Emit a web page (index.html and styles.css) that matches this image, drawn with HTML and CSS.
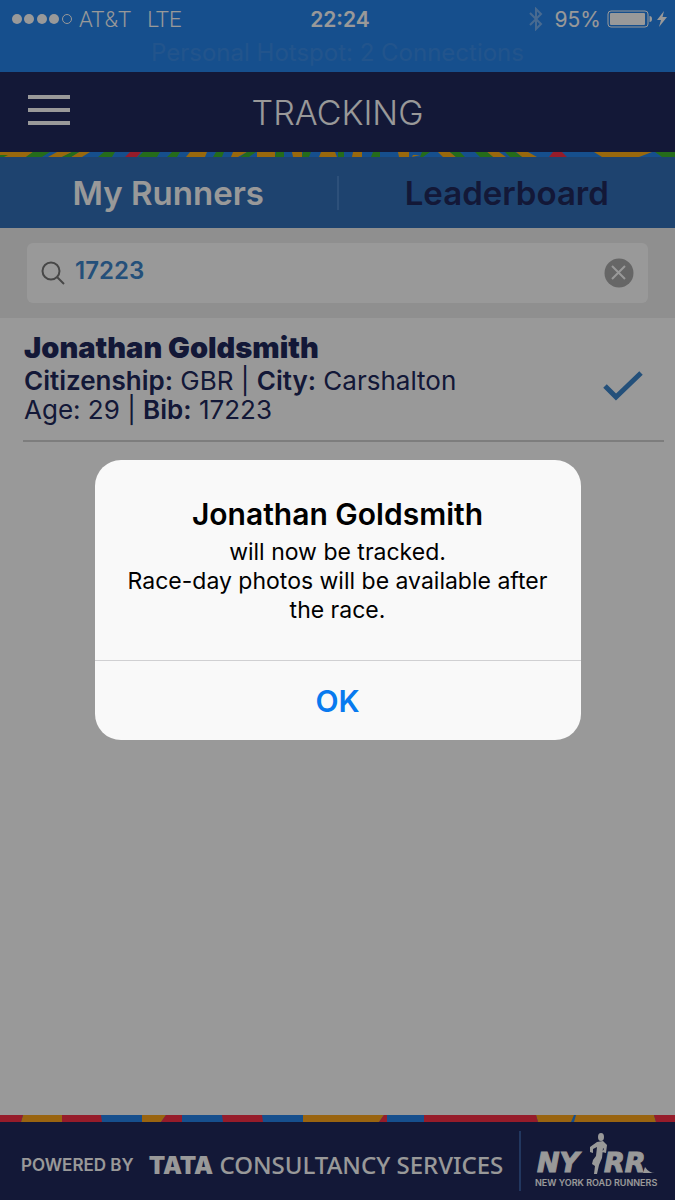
FILE: index.html
```html
<!DOCTYPE html>
<html lang="en">
<head>
    <meta charset="UTF-8">
    <meta name="viewport" content="width=device-width, initial-scale=1.0">
    <title>Tracking</title>
    <link rel="stylesheet" href="styles.css">
</head>
<body>
    <div class="app">
        <div class="status-bar">
            <div class="status-row">
                <div class="status-left">
                    <svg class="signal" width="62" height="12" viewBox="0 0 62 12">
                        <circle cx="6" cy="6" r="5"/>
                        <circle cx="18" cy="6" r="5"/>
                        <circle cx="31" cy="6" r="5"/>
                        <circle cx="43" cy="6" r="5"/>
                        <circle class="signal-empty" cx="56" cy="6" r="4.5"/>
                    </svg>
                    <span>AT&amp;T</span>
                    <span class="network">LTE</span>
                </div>
                <div class="time">22:24</div>
                <div class="status-right">
                    <svg class="bluetooth" width="14" height="24" viewBox="0 0 14 24">
                        <path d="M1 6 L12 17 L7 22 V2 L12 7 L1 18"/>
                    </svg>
                    <span>95%</span>
                    <svg width="62" height="18" viewBox="0 0 62 18">
                        <rect x="1" y="1" width="40" height="16" rx="3" fill="none" stroke="#fff"/>
                        <rect x="3" y="3" width="35" height="12" rx="1" fill="#fff"/>
                        <path d="M42.500 6 Q45 6 45 9 Q45 12 42.500 12 Z" fill="#fff"/>
                        <path d="M57 1 L50 10 H54 L52 17 L60 7 H55.500 Z" fill="#fff"/>
                    </svg>
                </div>
            </div>
            <div class="hotspot">Personal Hotspot: 2 Connections</div>
        </div>

        <header class="header">
            <button class="menu-btn" aria-label="Menu"><span></span><span></span><span></span></button>
            <h1>TRACKING</h1>
        </header>

        <svg class="stripe stripe-top" viewBox="0 0 675 5" preserveAspectRatio="none">
            <g fill="#ffae16">
                <path d="M0 0H33L26 5H0ZM57 0H72L62 5H48ZM79 0H90L82 5H71ZM190 0H207L205 5H186ZM233 0H247L238 5H231ZM257 0H275V5H257ZM292 0H302V5H293ZM321 0H335L337 5H319ZM353 0H362V5H352ZM398 0H409V5H399ZM413 3H420L412 5ZM438 0H450L456 5H443ZM487 0H499L506 5H493ZM516 0H528L537 5H522ZM594 0H652L639 5H602Z"/>
            </g>
            <g fill="#3fb52c">
                <path d="M0 3H8L4 5H0ZM33 0H50L42 5H26ZM72 0H79L71 5H62ZM104 0H115L112 5H98ZM143 0H160L157 5H138ZM172 0H180L177 5H167ZM216 0H224L222 5H213ZM247 0H256L249 5H240ZM276 0H284V5H275ZM303 0H311L309 5H302ZM338 0H344V5H338ZM373 0H380V5H371ZM422 0H430L423 5H420ZM450 0H460L465 5H456ZM475 0H487L493 5H480ZM505 0H515L522 5H510ZM655 0H675V5H662Z"/>
            </g>
            <g fill="#fa3047"><path d="M130 0H141L137 5H125ZM553 0H562L567 5H549Z"/></g>
        </svg>

        <nav class="tabs">
            <a href="#" class="tab active">My Runners</a>
            <a href="#" class="tab">Leaderboard</a>
        </nav>

        <div class="search">
            <div class="search-box">
                <svg class="search-icon" width="24" height="24" viewBox="0 0 24 24">
                    <circle cx="10" cy="10" r="8.500"/>
                    <path d="M16 16 L23 23"/>
                </svg>
                <input type="text" value="17223" aria-label="Search runners">
                <button class="clear-btn" aria-label="Clear">
                    <svg width="30" height="30" viewBox="0 0 30 30">
                        <circle cx="15" cy="15" r="14.500"/>
                        <path d="M8 8 L21 21 M21 8 L8 21"/>
                    </svg>
                </button>
            </div>
        </div>

        <main class="results">
            <div class="runner">
                <div class="runner-info">
                    <h2>Jonathan Goldsmith</h2>
                    <p><b>Citizenship:</b> GBR | <b>City:</b> Carshalton</p>
                    <p>Age: 29 | <b>Bib:</b> 17223</p>
                </div>
                <svg class="check" width="40" height="30" viewBox="0 0 40 30">
                    <path d="M2 15 L13 26 L38 2"/>
                </svg>
            </div>
        </main>

        <svg class="stripe stripe-bottom" viewBox="0 0 675 7" preserveAspectRatio="none">
            <g fill="#ffa71b"><path d="M23 0H62V7H21ZM142 0H166L161 7H142ZM303 0H384L379 7H303ZM536 0H574L571 7H538ZM576 0H654L656 7H574Z"/></g>
            <g fill="#fa3047"><path d="M0 0H23L21 7H0ZM62 0H101L102 7H62ZM166 0H182V7H161ZM222 0H262L263 7H223ZM384 0H387V7H379ZM424 0H536L538 7H424ZM654 0H675V7H656Z"/></g>
        </svg>

        <footer class="footer">
            <div class="powered">POWERED BY</div>
            <div class="sponsor"><b>TATA</b> CONSULTANCY SERVICES</div>
            <svg class="nyrr" width="124" height="60" viewBox="0 0 124 60">
                <text class="nyrr-big" x="2" y="41">NY</text>
                <text class="nyrr-big" x="69" y="41">RR</text>
                <path d="M110 36 Q114 42 120 42 H108Z"/>
                <ellipse cx="66" cy="6" rx="3" ry="4"/>
                <path d="M62 11 L68 10 L72 14 L71 22 L67 21 L69 18 L68 17 L67 27 L64 34 L62 43 H59 L60 35 L57 33 L58 29 L61 25 L62 16 L58 18 L58 22 L55 21 L55 16 Z"/>
                <text class="nyrr-small" x="0" y="55">NEW YORK ROAD RUNNERS</text>
            </svg>
        </footer>
    </div>

    <div class="overlay">
        <div class="dialog" role="alertdialog" aria-labelledby="dialogTitle">
            <div class="dialog-body">
                <h3 id="dialogTitle">Jonathan Goldsmith</h3>
                <p>will now be tracked.<br>Race-day photos will be available after the race.</p>
            </div>
            <button class="ok-btn">OK</button>
        </div>
    </div>
</body>
</html>
```

FILE: styles.css
```css
* {
    box-sizing: border-box;
}

body {
    margin: 0;
    font-family: Inter, 'Liberation Sans', sans-serif;
    background: white;
}

h1, h2, h3, p {
    margin: 0;
}

button {
    border: none;
    padding: 0;
    background: none;
    font-family: inherit;
    cursor: pointer;
}

svg {
    display: block;
    flex-shrink: 0;
}

.app {
    display: flex;
    flex-direction: column;
    min-height: 100vh;
}

/* status bar */
.status-bar {
    height: 72px;
    background: #2684eb;
    color: white;
    font-size: 21px;
}

.status-row {
    display: grid;
    grid-template-columns: 1fr auto 1fr;
    align-items: center;
    height: 38px;
    padding: 0 6px 0 11px;
}

.status-left, .status-right {
    display: flex;
    align-items: center;
    gap: 6px;
}

.status-left {
    font-family: Roboto, sans-serif;
    font-size: 22px;
    font-weight: 300;
}

.status-right {
    justify-content: flex-end;
}

.signal {
    fill: white;
}

.signal-empty {
    fill: none;
    stroke: white;
}

.network {
    margin-left: 10px;
}

.time {
    font-weight: 600;
}

.bluetooth {
    fill: none;
    stroke: #79b1f1;
    stroke-width: 2;
    margin-right: 6px;
}

.hotspot {
    color: #3a8de9;
    font-size: 24px;
    line-height: 30px;
    text-align: center;
}

/* header */
.header {
    display: grid;
    grid-template-columns: 42px 1fr 42px;
    align-items: center;
    height: 80px;
    padding: 0 28px;
    background: #20285d;
    color: white;
}

.header h1 {
    font-size: 34px;
    font-weight: 300;
    text-align: center;
}

.menu-btn {
    display: flex;
    flex-direction: column;
    gap: 9px;
    padding-bottom: 4px;
}

.menu-btn span {
    height: 4px;
    background: white;
}

.stripe {
    width: 100%;
    background: #2684eb;
}

.stripe-top {
    height: 5px;
}

.stripe-bottom {
    height: 7px;
}

/* tabs */
.tabs {
    display: flex;
    align-items: center;
    height: 71px;
    background: #3270b9;
}

.tab {
    flex: 1;
    font-size: 33px;
    font-weight: 600;
    line-height: 34px;
    text-align: center;
    text-decoration: none;
    color: #20285d;
}

.tab.active {
    color: white;
    border-right: 2px solid #4c86cc;
}

/* search */
.search {
    padding: 15px 27px;
    background: #eee;
}

.search-box {
    display: flex;
    align-items: center;
    gap: 10px;
    height: 60px;
    padding: 0 14px;
    border-radius: 6px;
    background: white;
}

.search-icon {
    fill: none;
    stroke: #777;
    stroke-width: 2;
}

.search-box input {
    flex: 1;
    min-width: 0;
    border: none;
    outline: none;
    padding: 0 0 6px;
    background: none;
    font-family: inherit;
    font-size: 24px;
    font-weight: 600;
    color: #3c85cc;
}

.clear-btn circle {
    fill: #aaa;
}

.clear-btn path {
    fill: none;
    stroke: white;
    stroke-width: 2;
}

/* results */
.results {
    flex: 1;
    padding: 14px 11px 0 23px;
}

.runner {
    display: flex;
    align-items: center;
    justify-content: space-between;
    padding: 0 21px 16px 1px;
    border-bottom: 2px solid #d0d0d0;
    color: #20285d;
}

.runner h2 {
    padding-bottom: 2px;
    font-size: 29px;
    font-weight: 900;
    line-height: 32px;
}

.runner p {
    font-size: 26px;
    line-height: 29px;
}

.runner b {
    font-weight: 600;
}

.check {
    margin-top: 16px;
    fill: none;
    stroke: #3c85cc;
    stroke-width: 5;
}

/* footer */
.footer {
    display: flex;
    align-items: center;
    height: 78px;
    padding: 0 16px 0 21px;
    background: #20285d;
    color: white;
    white-space: nowrap;
}

.powered {
    margin-top: 8px;
    font-size: 17px;
    font-weight: 600;
}

.sponsor {
    flex: 1;
    margin: 7px 0 0 15px;
    font-family: 'Noto Sans', sans-serif;
    font-size: 24px;
    font-weight: 500;
}

.sponsor b {
    font-family: Inter, sans-serif;
    font-weight: 900;
}

.nyrr {
    box-sizing: content-box;
    padding-left: 14px;
    border-left: 2px solid #3a5d9f;
    fill: white;
}

.nyrr-big {
    font-family: 'DejaVu Sans', sans-serif;
    font-size: 27px;
    font-weight: bold;
    font-style: italic;
    stroke: white;
    stroke-width: 1;
}

.nyrr-small {
    font-size: 9px;
    font-weight: 600;
}

/* dialog */
.overlay {
    position: fixed;
    inset: 0;
    display: flex;
    align-items: center;
    justify-content: center;
    background: rgba(0, 0, 0, 0.4);
}

.dialog {
    width: 72%;
    border-radius: 26px;
    background: #f9f9f9;
    text-align: center;
}

.dialog-body {
    padding: 35px 24px;
}

.dialog h3 {
    font-size: 30px;
    font-weight: 600;
    line-height: 38px;
    padding-bottom: 5px;
}

.dialog p {
    font-size: 23px;
    line-height: 29px;
}

.ok-btn {
    width: 100%;
    height: 80px;
    border-top: 1px solid #d0d0d2;
    font-size: 30px;
    font-weight: 600;
    color: #087aef;
}
```
